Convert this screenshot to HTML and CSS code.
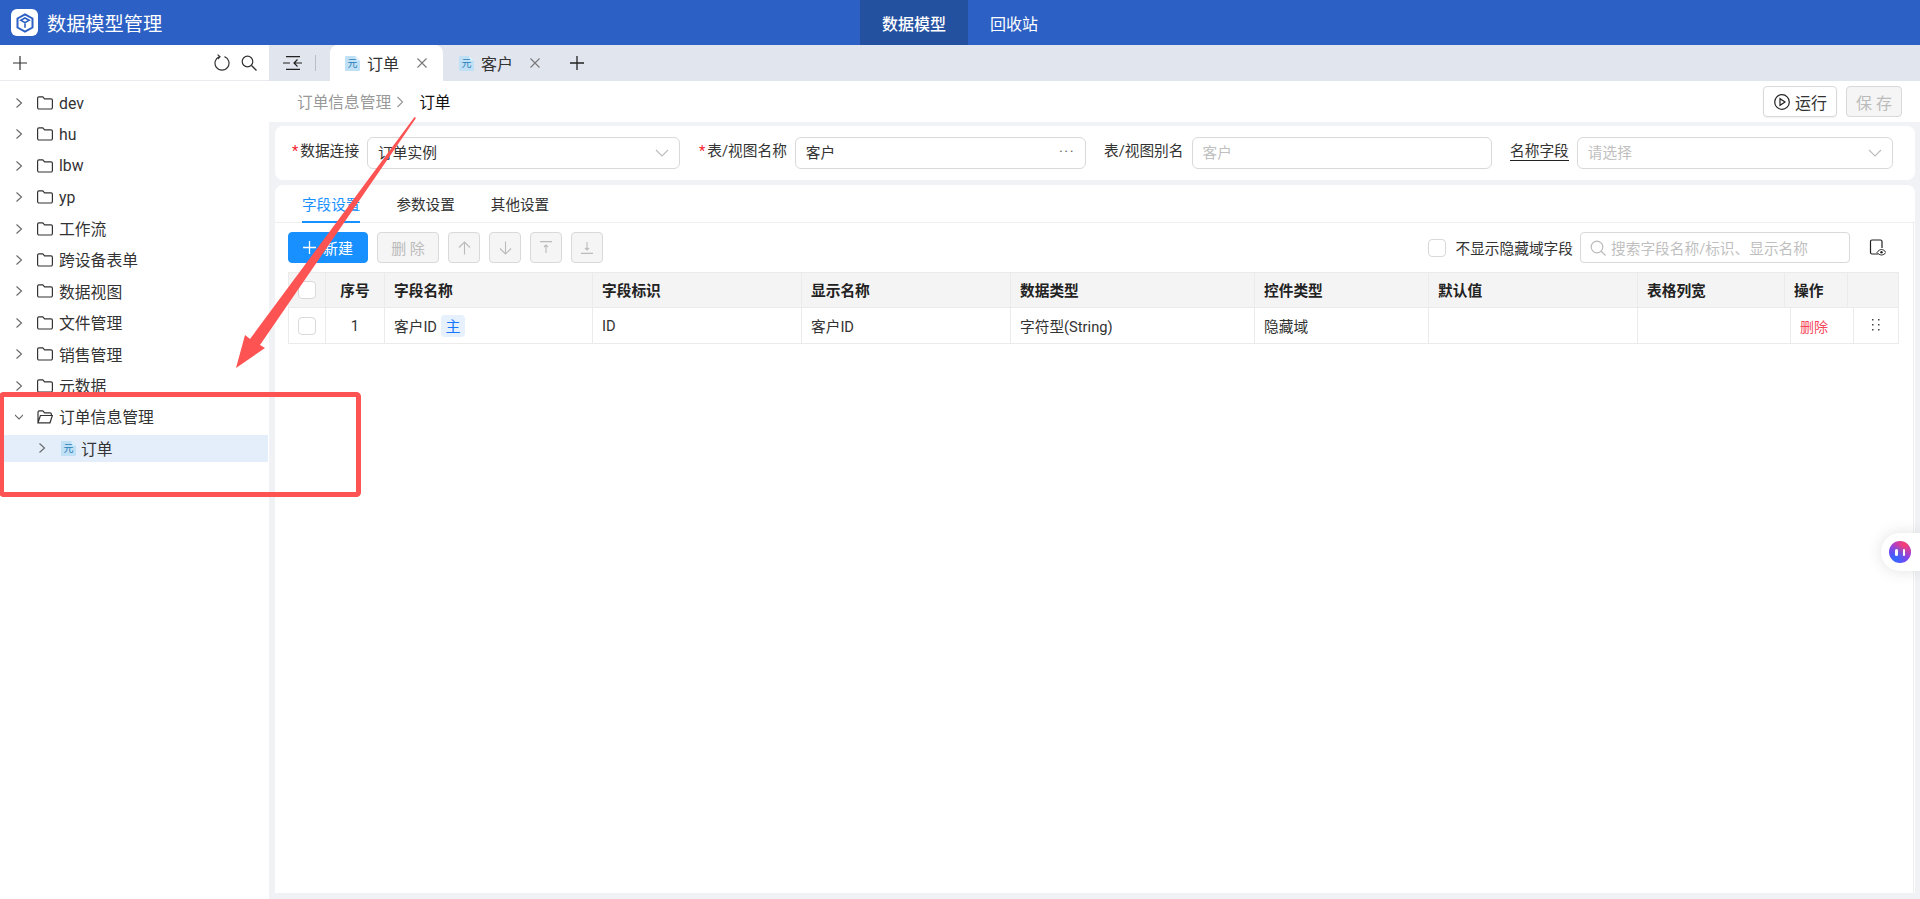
FILE: index.html
```html
<!DOCTYPE html>
<html lang="zh">
<head>
<meta charset="utf-8">
<title>数据模型管理</title>
<link rel="stylesheet" href="styles.css">
</head>
<body>
<svg class="defs" width="0" height="0" aria-hidden="true">
  <symbol id="chev" viewBox="0 0 8 12"><path d="M1.500 1.500 6.500 6l-5 4.500" fill="none" stroke="#666" stroke-width="1.100"/></symbol>
  <symbol id="folder" viewBox="0 0 16 14"><path d="M.6 2.200A1.400 1.400 0 0 1 2 .8h3.800l1.800 2H14a1.400 1.400 0 0 1 1.400 1.400v7.400a1.400 1.400 0 0 1-1.400 1.400H2A1.400 1.400 0 0 1 .6 11.600z" fill="none" stroke="#333" stroke-width="1.200"/></symbol>
  <symbol id="docbg" viewBox="0 0 15 15"><path d="M0 1.200A1.200 1.200 0 0 1 1.200 0H10.500l4.500 4.500V13.800A1.200 1.200 0 0 1 13.800 15H1.200A1.200 1.200 0 0 1 0 13.800z" fill="#bfe0f5"/><path d="M10.500 0 15 4.500h-4.500z" fill="#e3f2fb"/></symbol>
  <symbol id="x" viewBox="0 0 10 10"><path d="M.5.5l9 9M9.500.5l-9 9" stroke="#777" stroke-width="1.100" fill="none"/></symbol>
</svg>

<header class="topbar">
  <div class="brand">
    <span class="logo">
      <svg width="20" height="20" viewBox="0 0 20 20"><path d="M10 1.300 17.500 5.500v9L10 18.700 2.500 14.500v-9z" fill="none" stroke="#2c60c4" stroke-width="2"/><path d="M5.800 7.300 10 9.700l4.200-2.400L10 5zM10 9.700v5.100" fill="none" stroke="#2c60c4" stroke-width="1.600"/></svg>
    </span>
    <span class="title">数据模型管理</span>
  </div>
  <nav class="nav">
    <a class="nav-item is-active">数据模型</a>
    <a class="nav-item">回收站</a>
  </nav>
</header>

<div class="shell">
  <aside class="sidebar">
    <div class="side-tools">
      <svg width="14" height="14" viewBox="0 0 14 14"><path d="M7 0v14M0 7h14" stroke="#333" stroke-width="1.200"/></svg>
      <span class="spacer"></span>
      <svg width="16" height="17" viewBox="0 0 16 17"><path d="M5.500 2.600A7 7 0 1 0 10.500 2.600" fill="none" stroke="#333" stroke-width="1.200"/><path d="M3.600 .6 6 2.800 3.700 5" fill="none" stroke="#333" stroke-width="1.200"/></svg>
      <svg width="16" height="16" viewBox="0 0 16 16"><circle cx="6.500" cy="6.500" r="5.300" fill="none" stroke="#333" stroke-width="1.200"/><path d="m10.500 10.500 5 5" stroke="#333" stroke-width="1.300"/></svg>
    </div>
    <ul class="tree">
      <li class="node"><svg class="chev"><use href="#chev"/></svg><svg class="folder"><use href="#folder"/></svg><span>dev</span></li>
      <li class="node"><svg class="chev"><use href="#chev"/></svg><svg class="folder"><use href="#folder"/></svg><span>hu</span></li>
      <li class="node"><svg class="chev"><use href="#chev"/></svg><svg class="folder"><use href="#folder"/></svg><span>lbw</span></li>
      <li class="node"><svg class="chev"><use href="#chev"/></svg><svg class="folder"><use href="#folder"/></svg><span>yp</span></li>
      <li class="node"><svg class="chev"><use href="#chev"/></svg><svg class="folder"><use href="#folder"/></svg><span>工作流</span></li>
      <li class="node"><svg class="chev"><use href="#chev"/></svg><svg class="folder"><use href="#folder"/></svg><span>跨设备表单</span></li>
      <li class="node"><svg class="chev"><use href="#chev"/></svg><svg class="folder"><use href="#folder"/></svg><span>数据视图</span></li>
      <li class="node"><svg class="chev"><use href="#chev"/></svg><svg class="folder"><use href="#folder"/></svg><span>文件管理</span></li>
      <li class="node"><svg class="chev"><use href="#chev"/></svg><svg class="folder"><use href="#folder"/></svg><span>销售管理</span></li>
      <li class="node"><svg class="chev"><use href="#chev"/></svg><svg class="folder"><use href="#folder"/></svg><span>元数据</span></li>
      <li class="node">
        <svg class="chev" viewBox="0 0 8 12"><path d="M-.5 3.500 4 8l4.500-4.500" fill="none" stroke="#666" stroke-width="1.100"/></svg>
        <svg class="folder" viewBox="0 0 16 14"><path d="M1 12.500V2.200A1.400 1.400 0 0 1 2.400.8h3.400l1.800 2H13a1.400 1.400 0 0 1 1.400 1.400V5.500M1 12.800 3.400 5.500h12L13 12.800z" fill="none" stroke="#333" stroke-width="1.200"/></svg>
        <span>订单信息管理</span>
      </li>
      <li class="node node-child is-selected"><svg class="chev"><use href="#chev"/></svg><span class="doc"><svg class="doc-bg"><use href="#docbg"/></svg><span class="doc-text">元</span></span><span>订单</span></li>
    </ul>
  </aside>

  <main class="main">
    <div class="tabbar">
      <svg class="collapse" width="20" height="14" viewBox="0 0 20 14"><path d="M3 .6h14M3 13.400h14M0 7h7M19 7h-8M14.500 3.500 11 7l3.500 3.500" fill="none" stroke="#222" stroke-width="1.200"/></svg>
      <span class="tab-divider"></span>
      <div class="tab is-active"><span class="doc"><svg class="doc-bg"><use href="#docbg"/></svg><span class="doc-text">元</span></span><span>订单</span><svg class="close"><use href="#x"/></svg></div>
      <div class="tab tab-second"><span class="doc"><svg class="doc-bg"><use href="#docbg"/></svg><span class="doc-text">元</span></span><span>客户</span><svg class="close"><use href="#x"/></svg></div>
      <svg class="tab-add" width="14" height="14" viewBox="0 0 14 14"><path d="M7 0v14M0 7h14" stroke="#222" stroke-width="1.300"/></svg>
    </div>

    <div class="crumbs">
      <span class="crumb-parent">订单信息管理</span>
      <svg class="crumb-sep" width="8" height="12" viewBox="0 0 8 12"><path d="M1.500 1 6.500 6l-5 5" fill="none" stroke="#999" stroke-width="1.200"/></svg>
      <span class="crumb-current">订单</span>
      <span class="spacer"></span>
      <button class="btn btn-run">
        <svg width="16" height="16" viewBox="0 0 16 16"><circle cx="8" cy="8" r="7.300" fill="none" stroke="#222" stroke-width="1.200"/><path d="M6 4.700v6.600L11 8z" fill="none" stroke="#222" stroke-width="1.200"/></svg>
        运行
      </button>
      <button class="btn btn-save">保 存</button>
    </div>

    <section class="form-card">
      <div class="field">
        <label class="label"><i class="req">*</i>数据连接</label>
        <div class="input"><span>订单实例</span><svg class="arrow" width="14" height="8" viewBox="0 0 14 8"><path d="M1 1l6 6 6-6" fill="none" stroke="#bbb" stroke-width="1.100"/></svg></div>
      </div>
      <div class="field">
        <label class="label"><i class="req">*</i>表/视图名称</label>
        <div class="input"><span>客户</span><span class="dots">···</span></div>
      </div>
      <div class="field">
        <label class="label">表/视图别名</label>
        <div class="input"><span class="placeholder">客户</span></div>
      </div>
      <div class="field">
        <label class="label label-under">名称字段</label>
        <div class="input"><span class="placeholder">请选择</span><svg class="arrow" width="14" height="8" viewBox="0 0 14 8"><path d="M1 1l6 6 6-6" fill="none" stroke="#bbb" stroke-width="1.100"/></svg></div>
      </div>
    </section>

    <section class="panel">
      <div class="panel-tabs">
        <a class="ptab is-active">字段设置</a>
        <a class="ptab">参数设置</a>
        <a class="ptab">其他设置</a>
      </div>
      <div class="panel-body">
        <div class="toolbar">
          <button class="btn btn-primary"><svg width="13" height="13" viewBox="0 0 13 13"><path d="M6.500 0v13M0 6.500h13" stroke="#fff" stroke-width="1.300"/></svg>新建</button>
          <button class="btn btn-off btn-del">删 除</button>
          <button class="btn btn-off btn-icon"><svg width="13" height="14" viewBox="0 0 13 14"><path d="M6.500 13.500V1M1 6.500 6.500 1 12 6.500" fill="none" stroke="#bbb" stroke-width="1.100"/></svg></button>
          <button class="btn btn-off btn-icon"><svg width="13" height="14" viewBox="0 0 13 14"><path d="M6.500 .5V13M1 7.500 6.500 13 12 7.500" fill="none" stroke="#bbb" stroke-width="1.100"/></svg></button>
          <button class="btn btn-off btn-icon"><svg width="14" height="13" viewBox="0 0 14 13"><path d="M1 .6h12M7 12V4M5 6l2-2 2 2" fill="none" stroke="#bbb" stroke-width="1.100"/></svg></button>
          <button class="btn btn-off btn-icon"><svg width="14" height="13" viewBox="0 0 14 13"><path d="M1 12.400h12M7 1v8M5 7l2 2 2-2" fill="none" stroke="#bbb" stroke-width="1.100"/></svg></button>
          <span class="spacer"></span>
          <span class="check"></span>
          <span class="check-label">不显示隐藏域字段</span>
          <div class="search">
            <svg width="16" height="16" viewBox="0 0 16 16"><circle cx="7" cy="7" r="5.800" fill="none" stroke="#bbb" stroke-width="1.200"/><path d="m11 11 4.500 4.500" stroke="#bbb" stroke-width="1.200"/></svg>
            <span class="placeholder">搜索字段名称/标识、显示名称</span>
          </div>
          <svg class="view-icon" width="17" height="17" viewBox="0 0 17 17"><path d="M9 15H3A1.500 1.500 0 0 1 1.500 13.500V2.500A1.500 1.500 0 0 1 3 1h8.500A1.500 1.500 0 0 1 13 2.500V9" fill="none" stroke="#222" stroke-width="1.200"/><path d="M8 13.500c1.400-2 3-3 4.500-3s3.100 1 4.500 3c-1.400 1.700-3 2.500-4.500 2.500S9.400 15.200 8 13.500z" fill="#fff" stroke="#222" stroke-width="1"/><circle cx="12.500" cy="13.300" r="1.200" fill="#222"/></svg>
        </div>

        <div class="grid grid-head">
          <div class="cell cell-center"><span class="check"></span></div>
          <div class="cell cell-center">序号</div>
          <div class="cell">字段名称</div>
          <div class="cell">字段标识</div>
          <div class="cell">显示名称</div>
          <div class="cell">数据类型</div>
          <div class="cell">控件类型</div>
          <div class="cell">默认值</div>
          <div class="cell">表格列宽</div>
          <div class="cell">操作</div>
          <div class="cell"></div>
        </div>
        <div class="grid grid-row">
          <div class="cell cell-center"><span class="check"></span></div>
          <div class="cell cell-center">1</div>
          <div class="cell">客户ID<span class="tag">主</span></div>
          <div class="cell">ID</div>
          <div class="cell">客户ID</div>
          <div class="cell">字符型(String)</div>
          <div class="cell">隐藏域</div>
          <div class="cell"></div>
          <div class="cell"></div>
          <div class="cell cell-danger">删除</div>
          <div class="cell cell-center"><svg width="8" height="13" viewBox="0 0 8 13"><g fill="#444"><rect x="0" y="0" width="1.500" height="1.500"/><rect x="6" y="0" width="1.500" height="1.500"/><rect x="0" y="5" width="1.500" height="1.500"/><rect x="6" y="5" width="1.500" height="1.500"/><rect x="0" y="10" width="1.500" height="1.500"/><rect x="6" y="10" width="1.500" height="1.500"/></g></svg></div>
        </div>
      </div>
    </section>
  </main>
</div>

<div class="assistant"><span class="orb"><i></i><i></i></span></div>

<svg class="annotations" width="1920" height="899" viewBox="0 0 1920 899" aria-hidden="true">
  <rect x="1.500" y="394.500" width="357" height="100" rx="2" fill="none" stroke="#fd5353" stroke-width="5"/>
  <path d="M236 368 245 335 250 339 414.500 117 416 118 260 345 265 348z" fill="#fd5353"/>
</svg>
</body>
</html>
```
FILE: styles.css
```css
* { box-sizing: border-box; }
html, body { margin: 0; height: 100%; overflow: hidden; }
body {
  font-family: Roboto, "Noto Sans CJK SC", "Liberation Sans", sans-serif;
  font-size: 15px;
  color: #333;
  background: #fff;
}
.defs { position: absolute; }
.spacer { flex: 1; }
button { font: inherit; }

.doc { position: relative; display: inline-flex; width: 15px; height: 15px; flex: none; align-items: center; justify-content: center; }
.doc-bg { position: absolute; left: 0; top: 0; width: 15px; height: 15px; }
.doc-text { position: relative; top: 1px; font-size: 10px; line-height: 10px; color: #2a7fb8; }

.topbar { height: 45px; background: #2c60c4; display: flex; color: #fff; }
.brand { width: 860px; display: flex; align-items: center; padding-left: 11px; gap: 9px; }
.logo { width: 27px; height: 27px; border-radius: 6px; background: #fff; display: flex; align-items: center; justify-content: center; }
.title { font-size: 19.200px; }
.nav { display: flex; }
.nav-item { display: flex; align-items: center; padding: 0 22px; font-size: 16px; }
.nav-item.is-active { background: #24519f; font-weight: 500; }

.shell { display: flex; height: 854px; }
.sidebar { width: 269px; flex: none; background: #fff; }
.side-tools { height: 36px; border-bottom: 1px solid #e8eaee; display: flex; align-items: center; gap: 11px; padding: 0 12px 0 13px; }
.tree { list-style: none; margin: 0; padding: 8.500px 0 0; display: flex; flex-direction: column; gap: 4.400px; }
.node { height: 27px; margin-right: 1px; display: flex; align-items: center; padding-left: 15px; font-size: 15.800px; }
.node .chev { width: 8px; height: 12px; margin-right: 14px; flex: none; }
.node .folder { width: 16px; height: 14px; margin-right: 6px; flex: none; }
.node .doc { margin-right: 5px; }
.node-child { padding-left: 38px; }
.node-child .chev { margin-right: 15px; }
.is-selected { background: #e4eefb; }

.main { flex: 1; min-width: 0; background: #f0f2f6; display: flex; flex-direction: column; }
.tabbar { height: 36px; background: #e1e5ee; display: flex; align-items: center; padding-left: 14px; flex: none; }
.collapse { flex: none; }
.tab-divider { width: 1px; height: 16px; background: #b9bdc6; margin: 0 14px 0 12px; }
.tab { height: 36px; width: 113px; display: flex; align-items: center; padding-left: 15px; font-size: 16px; }
.tab.is-active { background: #fff; border-radius: 8px 8px 0 0; }
.tab-second { padding-left: 16px; }
.tab .doc { margin-right: 7px; }
.tab .close { width: 10px; height: 10px; margin-left: 18px; flex: none; }
.tab-second .close { margin-left: 17px; }
.tab-add { margin-left: 14px; }

.crumbs { height: 41px; background: #fff; display: flex; align-items: center; padding: 0 18px 0 28px; flex: none; font-size: 15.700px; }
.crumb-parent { color: #999; }
.crumb-sep { margin: 0 15px 0 5px; }
.crumb-current { color: #111; }

.btn { height: 31px; border: 1px solid #d9d9d9; border-radius: 4px; background: #fff; color: #333; display: inline-flex; align-items: center; justify-content: center; padding: 0; }
.btn-run { width: 74px; gap: 5px; padding-left: 1px; font-size: 16px; box-shadow: 0 1px 2px rgba(0,0,0,.06); }
.btn-save { width: 56px; margin-left: 9px; background: #f5f5f5; color: #bbb; font-size: 16px; }

.form-card { margin: 4px 5px 0 6px; height: 54px; background: #fff; border-radius: 8px; display: grid; grid-template-columns: 389px 388px 388px 383px; column-gap: 18px; padding-left: 16px; align-items: center; flex: none; }
.field { display: flex; align-items: center; gap: 8px; }
.label { white-space: nowrap; font-size: 14.700px; line-height: 20px; color: #333; position: relative; top: -2px; }
.label-under { border-bottom: 1px solid #222; line-height: 18px; }
.req { color: #f5222d; font-style: normal; margin: 0 2px 0 1px; }
.input { flex: 1; min-width: 0; height: 32px; border: 1px solid #d9d9d9; border-radius: 6px; background: #fff; display: flex; align-items: center; justify-content: space-between; padding: 0 10px 3px; font-size: 14.700px; }
.placeholder { color: #bfbfbf; }
.arrow { flex: none; position: relative; top: 1px; }
.dots { color: #666; letter-spacing: 1.500px; }

.panel { margin: 5px 5px 6px 6px; flex: 1; min-height: 0; background: #fff; border-radius: 8px 8px 0 0; display: flex; flex-direction: column; }
.panel-tabs { height: 38px; border-bottom: 1px solid #eee; display: flex; gap: 36px; padding-left: 27px; flex: none; }
.ptab { display: flex; align-items: center; padding-top: 1px; margin-bottom: -1px; font-size: 14.600px; border-bottom: 2px solid transparent; }
.ptab.is-active { color: #1890ff; border-bottom-color: #1890ff; }
.panel-body { flex: 1; margin-right: 1px; border-right: 1px solid #eee; padding: 9px 13px 0 13px; }

.toolbar { display: flex; align-items: center; gap: 9px; height: 31px; margin-bottom: 9px; }
.btn-primary { width: 80px; background: #1890ff; border-color: #1890ff; color: #fff; gap: 7px; font-size: 15px; }
.btn-off { background: #f5f5f5; color: #bbb; }
.btn-del { width: 62px; font-size: 15px; }
.btn-icon { width: 32px; }
.check { display: inline-block; width: 18px; height: 18px; border: 1px solid #d9d9d9; border-radius: 4px; background: #fff; flex: none; }
.check-label { font-size: 14.700px; margin-right: -1px; }
.search { width: 270px; height: 31px; margin-left: -1px; border: 1px solid #d9d9d9; border-radius: 4px; display: flex; align-items: center; gap: 5px; padding: 0 9px; font-size: 14.700px; }
.view-icon { margin: 0 14px 0 10px; }

.grid { display: grid; font-size: 14.700px; border-left: 1px solid #ebebeb; border-right: 1px solid #ebebeb; border-bottom: 1px solid #ebebeb; margin-right: 1px; }
.grid-head { height: 36px; grid-template-columns: 37px 59px 208px 209px 209px 244px 174px 209px 147px 63px 1fr; background: #f4f4f4; font-weight: 700; border-top: 1px solid #ebebeb; color: #222; }
.grid-head .cell { padding-bottom: 1px; }
.grid-row { height: 36px; grid-template-columns: 37px 59px 208px 209px 209px 244px 174px 209px 153px 63px 1fr; }
.cell { display: flex; align-items: center; padding: 0 9px; border-right: 1px solid #ebebeb; white-space: nowrap; }
.cell:last-child { border-right: 0; }
.cell-center { justify-content: center; padding: 0; }
.cell-danger { color: #f5475b; font-size: 14px; }
.tag { margin-left: 4px; width: 24px; height: 22px; border-radius: 4px; background: #e6f1fd; color: #1677ff; display: flex; align-items: center; justify-content: center; font-size: 15px; }

.assistant { position: fixed; left: 1881px; top: 533px; width: 39px; height: 38px; background: #fff; border-radius: 19px 0 0 19px; box-shadow: 0 0 16px rgba(0,0,0,.12); display: flex; align-items: center; padding-left: 8px; }
.orb { width: 22px; height: 22px; border-radius: 50%; background: radial-gradient(circle at 30% 80%, #2f6bff 0, transparent 60%), radial-gradient(circle at 70% 15%, #ff3f6c 0, transparent 65%), #8a3cf0; display: flex; align-items: center; justify-content: center; gap: 5px; }
.orb i { width: 2.500px; height: 7px; background: #fff; border-radius: 2px; }

.annotations { position: fixed; left: 0; top: 0; pointer-events: none; }
```
